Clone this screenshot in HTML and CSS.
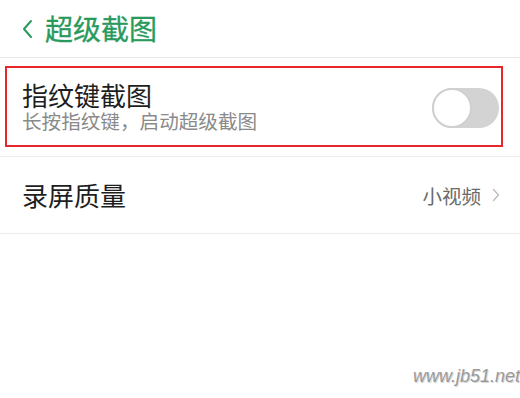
FILE: index.html
```html
<!DOCTYPE html>
<html lang="zh">
<head>
<meta charset="utf-8">
<link rel="stylesheet" href="styles.css">
</head>
<body>
<div class="screen">
  <header class="header">
    <svg class="back" width="12" height="20" viewBox="0 0 12 20"><path d="M10 2 L3 10 L10 18" fill="none" stroke="#2a9a5c" stroke-width="2" stroke-linecap="round" stroke-linejoin="round"/></svg>
    <span class="title">超级截图</span>
  </header>
  <section class="section">
    <div class="highlight">
      <div class="texts">
        <div class="item-title">指纹键截图</div>
        <div class="item-sub">长按指纹键，启动超级截图</div>
      </div>
      <div class="toggle"><div class="knob"></div></div>
    </div>
  </section>
  <div class="row">
    <span class="item-title">录屏质量</span>
    <span class="value">小视频
      <svg class="chev" width="8" height="14" viewBox="0 0 8 14"><path d="M1.5 1.5 L6.5 7 L1.5 12.5" fill="none" stroke="#bdbdbd" stroke-width="1.4" stroke-linecap="round" stroke-linejoin="round"/></svg>
    </span>
  </div>
  <div class="watermark">www.jb51.net</div>
</div>
</body>
</html>
```
FILE: styles.css
```css
* { box-sizing: border-box; }
html, body { margin: 0; padding: 0; background: #fff; }
body {
  font-family: "Noto Sans CJK SC", "Noto Sans", sans-serif;
  width: 520px;
  height: 398px;
  overflow: hidden;
}
.screen { position: relative; width: 520px; height: 398px; }
.header {
  height: 58px;
  display: flex;
  align-items: center;
  padding-left: 21px;
  border-bottom: 1px solid #e6e6e6;
}
.back { margin-right: 12px; margin-top: 1px; }
.title {
  font-size: 28px;
  color: #2a9a5c;
  line-height: 34px;
  margin-top: -2px;
  -webkit-text-stroke: 0.3px #2a9a5c;
}
.section {
  padding: 8px 17px 9px 5px;
  border-bottom: 1px solid #ececec;
}
.highlight {
  height: 81px;
  border: 2px solid #e8262c;
  display: flex;
  align-items: center;
  justify-content: space-between;
  padding: 0 2px 0 15px;
}
.texts { display: flex; flex-direction: column; margin-top: -2px; }
.item-title { font-size: 26px; color: #1e1e1e; line-height: 30px; }
.item-sub { font-size: 19.6px; color: #8a8a8a; line-height: 22px; }
.toggle {
  width: 67px;
  height: 40px;
  border-radius: 20px;
  background: #d3d3d3;
  position: relative;
  margin-top: 2px;
}
.knob {
  position: absolute;
  left: 0;
  top: 0;
  width: 40px;
  height: 40px;
  border-radius: 50%;
  background: #fff;
  border: 2px solid #d0d0d0;
}
.row {
  height: 77px;
  display: flex;
  align-items: center;
  justify-content: space-between;
  padding: 0 20px 0 22px;
  border-bottom: 1px solid #ececec;
}
.value {
  font-size: 19.5px;
  color: #6a6a6a;
  display: flex;
  align-items: center;
  gap: 11px;
}
.watermark {
  position: absolute;
  left: 413px;
  top: 366px;
  font-family: "Liberation Sans", Arial, sans-serif;
  font-style: italic;
  font-size: 18px;
  color: #9a9a9a;
  white-space: nowrap;
  text-shadow: 1px 1px 0 #d8d8d8;
}
```
